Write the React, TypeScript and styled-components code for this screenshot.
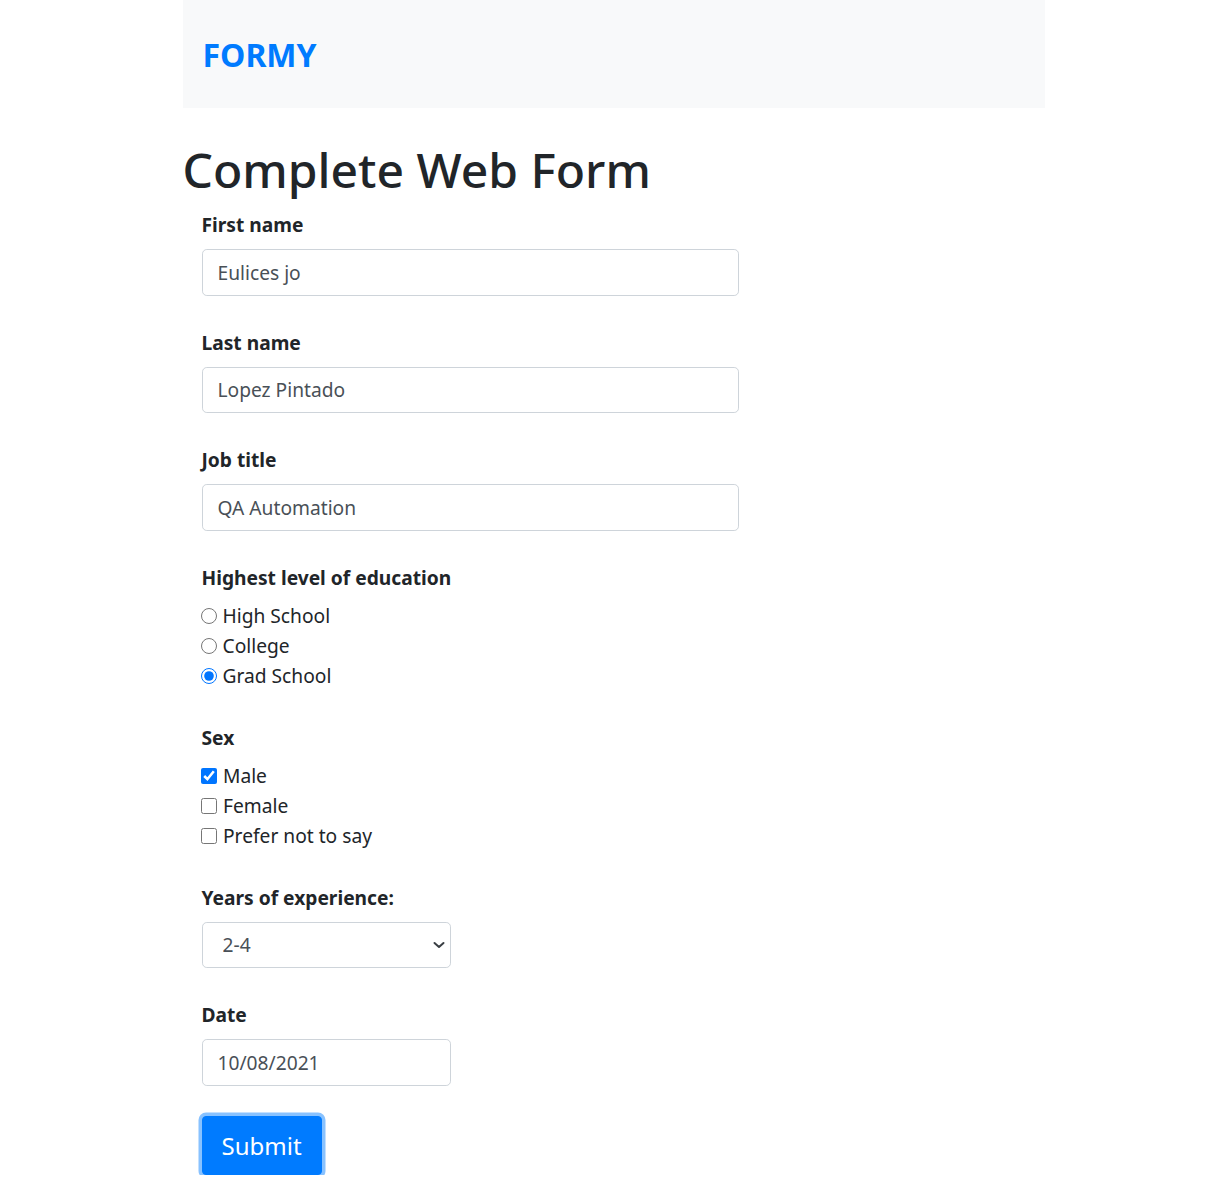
import styled, { createGlobalStyle } from 'styled-components';

const GlobalStyle = createGlobalStyle`
  html, body {
    margin: 0;
    padding: 0;
    background: #fff;
  }
  body {
    font-family: "Noto Sans", "Open Sans", sans-serif;
    color: #212529;
    font-size: 19.2px;
  }
  * {
    box-sizing: border-box;
  }
`;

const Page = styled.div`
  width: 862px;
  margin: 0 auto;
`;

const NavBar = styled.nav`
  height: 108px;
  background: #f8f9fa;
  display: flex;
  align-items: center;
  padding-left: 20px;
`;

const Brand = styled.a`
  font-size: 32px;
  font-weight: 700;
  color: #007bff;
  text-decoration: none;
  line-height: 1;
  margin-top: 1px;
`;

const Title = styled.h1`
  margin: 33px 0 12px;
  font-size: 48px;
  font-weight: 500;
  line-height: 57px;
  color: #212529;
`;

const Form = styled.form`
  padding: 0 19px;
`;

const Field = styled.div`
  margin-bottom: 32px;
`;

const Label = styled.label`
  display: block;
  font-weight: 700;
  line-height: 29px;
  margin-bottom: 10px;
`;

const TextInput = styled.input<{ $width?: number }>`
  display: block;
  width: ${(p) => p.$width ?? 537}px;
  height: 46.5px;
  padding: 0 15px;
  font-family: inherit;
  font-size: 19.2px;
  color: #495057;
  background: #fff;
  border: 1px solid #ced4da;
  border-radius: 4.8px;
  outline: none;
`;

const SelectBox = styled.div`
  position: relative;
  width: 249px;
`;

const Select = styled.select`
  display: block;
  width: 100%;
  height: 46.5px;
  padding: 0 30px 0 20px;
  font-family: inherit;
  font-size: 19.2px;
  color: #495057;
  background: #fff;
  border: 1px solid #ced4da;
  border-radius: 4.8px;
  outline: none;
  appearance: none;
`;

const Chevron = styled.svg`
  position: absolute;
  right: 6px;
  top: 50%;
  width: 12px;
  height: 8px;
  margin-top: -4px;
  pointer-events: none;
`;

const GroupLabel = styled.div`
  font-weight: 700;
  line-height: 29px;
  margin-bottom: 9px;
`;

const Choice = styled.label`
  display: flex;
  align-items: center;
  height: 30px;
  gap: 6px;
  line-height: 30px;
`;

const Radio = styled.input`
  width: 16px;
  height: 16px;
  margin: 0 0 0 -1px;
`;

const Check = styled.input`
  width: 16px;
  height: 16px;
  margin: 0 0 0 -0.5px;
`;

const SubmitButton = styled.button`
  margin-top: -2px;
  height: 59px;
  padding: 0 19px;
  font-family: inherit;
  font-size: 24px;
  color: #fff;
  background: #007bff;
  border: 1px solid #007bff;
  border-radius: 4px;
  box-shadow: 0 0 0 3.5px rgba(38, 143, 255, 0.55);
`;

const education = ['High School', 'College', 'Grad School'];
const sexes = ['Male', 'Female', 'Prefer not to say'];

export default function App() {
  return (
    <>
      <GlobalStyle />
      <Page>
        <NavBar>
          <Brand href="#">FORMY</Brand>
        </NavBar>
        <Title>Complete Web Form</Title>
        <Form onSubmit={(e) => e.preventDefault()}>
          <Field>
            <Label htmlFor="first-name">First name</Label>
            <TextInput id="first-name" defaultValue="Eulices jo" />
          </Field>
          <Field>
            <Label htmlFor="last-name">Last name</Label>
            <TextInput id="last-name" defaultValue="Lopez Pintado" />
          </Field>
          <Field>
            <Label htmlFor="job-title">Job title</Label>
            <TextInput id="job-title" defaultValue="QA Automation" />
          </Field>
          <Field>
            <GroupLabel>Highest level of education</GroupLabel>
            {education.map((item) => (
              <Choice key={item}>
                <Radio
                  type="radio"
                  name="education"
                  defaultChecked={item === 'Grad School'}
                />
                {item}
              </Choice>
            ))}
          </Field>
          <Field>
            <GroupLabel>Sex</GroupLabel>
            {sexes.map((item) => (
              <Choice key={item}>
                <Check type="checkbox" defaultChecked={item === 'Male'} />
                {item}
              </Choice>
            ))}
          </Field>
          <Field>
            <Label htmlFor="experience">Years of experience:</Label>
            <SelectBox>
              <Select id="experience" defaultValue="2-4">
                <option>Select an option</option>
                <option>0-1</option>
                <option>2-4</option>
                <option>5-9</option>
                <option>10+</option>
              </Select>
              <Chevron viewBox="0 0 12 8" fill="none">
                <path
                  d="M1.5 2 L6 6 L10.5 2"
                  stroke="#3a3f44"
                  strokeWidth="2"
                  strokeLinecap="round"
                  strokeLinejoin="round"
                />
              </Chevron>
            </SelectBox>
          </Field>
          <Field>
            <Label htmlFor="datepicker">Date</Label>
            <TextInput id="datepicker" $width={249} defaultValue="10/08/2021" />
          </Field>
          <SubmitButton type="submit">Submit</SubmitButton>
        </Form>
      </Page>
    </>
  );
}
